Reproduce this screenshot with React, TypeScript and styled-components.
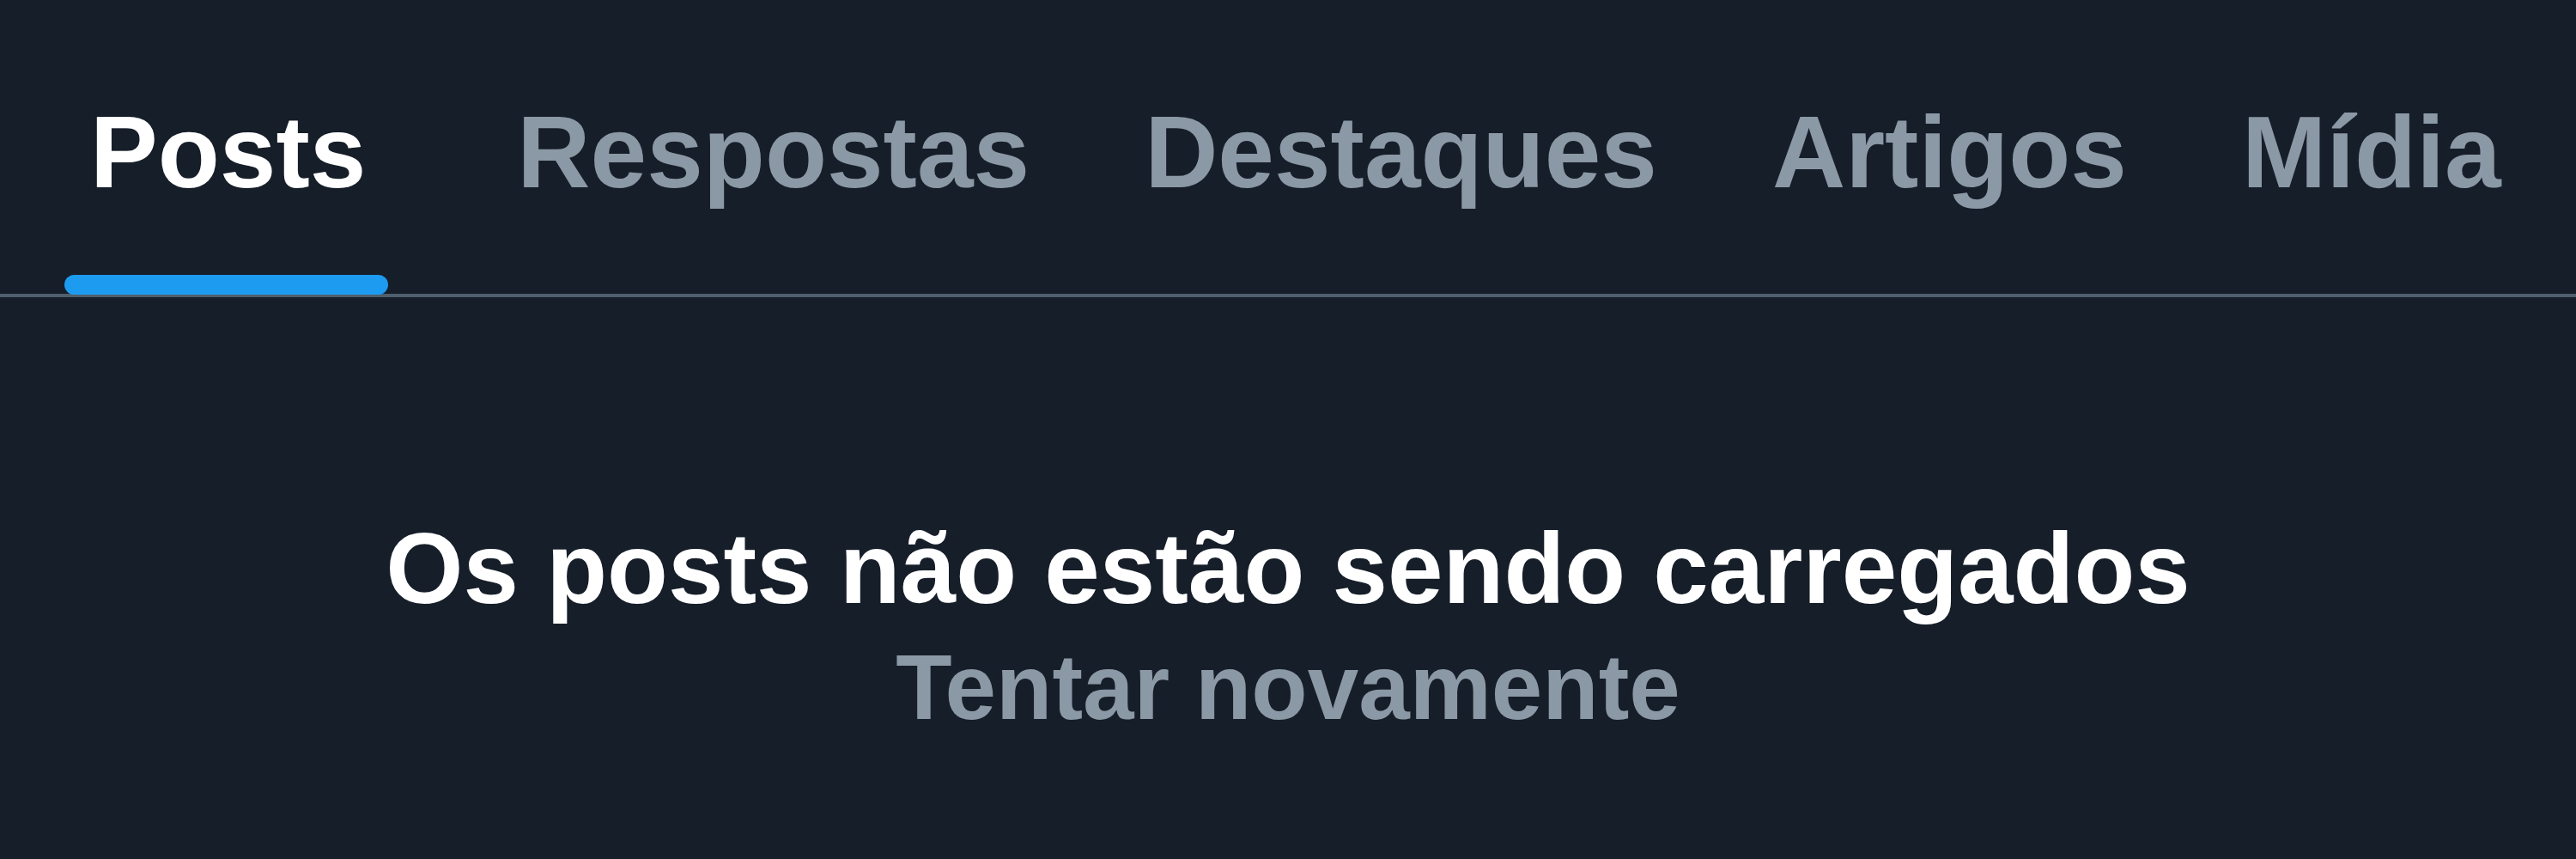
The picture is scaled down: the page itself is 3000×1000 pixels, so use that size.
import React from "react";
import styled, { createGlobalStyle } from "styled-components";

const Global = createGlobalStyle`
  html, body {
    margin: 0;
    padding: 0;
    background: #161e29;
  }
  body {
    font-family: "Liberation Sans", Arial, sans-serif;
  }
`;

const Page = styled.div`
  width: 3000px;
  height: 1000px;
  background: #161e29;
  display: flex;
  flex-direction: column;
  overflow: hidden;
`;

const TabBar = styled.nav`
  display: flex;
  align-items: stretch;
  height: 346px;
  border-bottom: 4px solid #4f5e6c;
  box-sizing: border-box;
  padding-left: 38px;
`;

const Tab = styled.div<{ $active?: boolean }>`
  position: relative;
  display: flex;
  align-items: flex-start;
  justify-content: center;
  padding: 118px 67px 0;
  font-size: 118px;
  font-weight: 700;
  line-height: 118px;
  color: ${(p) => (p.$active ? "#ffffff" : "#8b98a5")};
  white-space: nowrap;

  &:first-child {
    margin-right: 42px;
  }
`;

const Indicator = styled.span`
  position: absolute;
  left: 37px;
  right: 41px;
  bottom: -1px;
  height: 23px;
  border-radius: 12px;
  background: #1d9bf0;
`;

const Empty = styled.section`
  display: flex;
  flex-direction: column;
  align-items: center;
  padding-top: 254px;
`;

const Title = styled.h2`
  margin: 0;
  font-size: 116px;
  line-height: 124px;
  font-weight: 700;
  color: #ffffff;
`;

const Retry = styled.button`
  margin-top: 21px;
  padding: 0;
  border: none;
  background: none;
  font-family: "Liberation Sans", Arial, sans-serif;
  font-size: 107px;
  line-height: 110px;
  font-weight: 700;
  color: #8b98a5;
  cursor: pointer;
`;

const tabs = [
  { label: "Posts", active: true },
  { label: "Respostas" },
  { label: "Destaques" },
  { label: "Artigos" },
  { label: "Mídia" },
];

export default function App() {
  return (
    <Page>
      <Global />
      <TabBar>
        {tabs.map((t) => (
          <Tab key={t.label} $active={t.active}>
            {t.label}
            {t.active && <Indicator />}
          </Tab>
        ))}
      </TabBar>
      <Empty>
        <Title>Os posts não estão sendo carregados</Title>
        <Retry>Tentar novamente</Retry>
      </Empty>
    </Page>
  );
}
